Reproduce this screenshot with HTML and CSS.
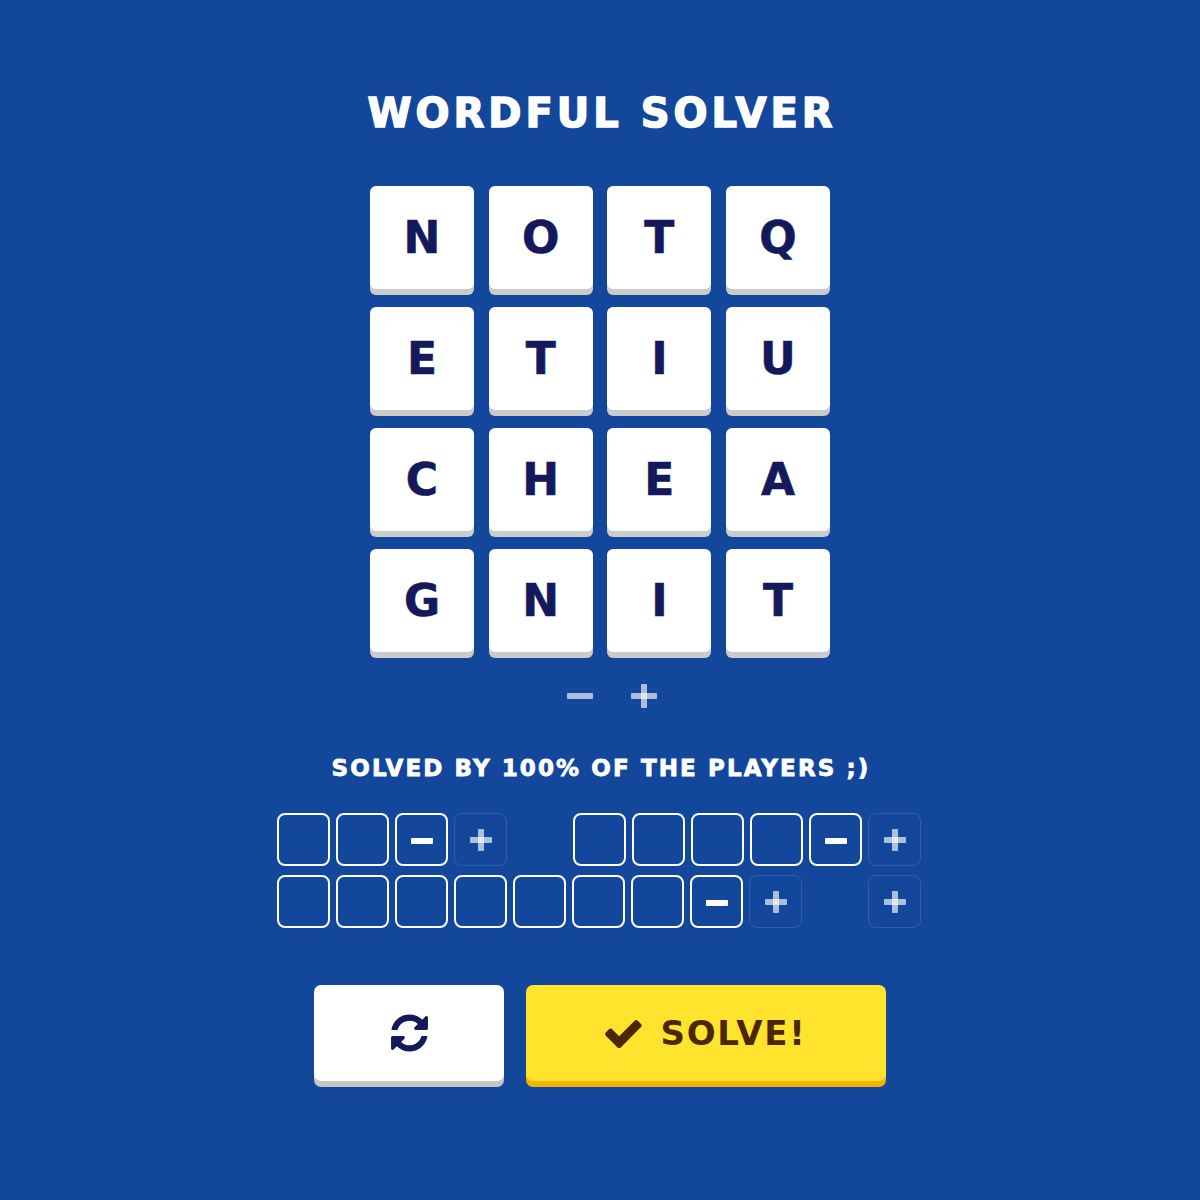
FILE: index.html
```html
<!DOCTYPE html>
<html>
<head>
<meta charset="utf-8">
<title>Wordful Solver</title>
<link rel="stylesheet" href="styles.css">
</head>
<body>
<main class="app">
  <h1 class="title">WORDFUL SOLVER</h1>

  <div class="grid">
    <div class="tile">N</div><div class="tile">O</div><div class="tile">T</div><div class="tile">Q</div>
    <div class="tile">E</div><div class="tile">T</div><div class="tile">I</div><div class="tile">U</div>
    <div class="tile">C</div><div class="tile">H</div><div class="tile">E</div><div class="tile">A</div>
    <div class="tile">G</div><div class="tile">N</div><div class="tile">I</div><div class="tile">T</div>
  </div>

  <div class="size-controls">
    <span class="ctl minus-ctl"></span>
    <span class="ctl plus-ctl"></span>
  </div>

  <p class="subtitle">SOLVED BY 100% OF THE PLAYERS ;)</p>

  <div class="words">
    <div class="word">
      <div class="box"></div><div class="box"></div>
      <div class="box"><span class="minus"></span></div>
      <div class="box add"><span class="plus"></span></div>
    </div>
    <div class="word">
      <div class="box"></div><div class="box"></div><div class="box"></div><div class="box"></div>
      <div class="box"><span class="minus"></span></div>
      <div class="box add"><span class="plus"></span></div>
    </div>
    <div class="word">
      <div class="box"></div><div class="box"></div><div class="box"></div><div class="box"></div>
      <div class="box"></div><div class="box"></div><div class="box"></div>
      <div class="box"><span class="minus"></span></div>
      <div class="box add"><span class="plus"></span></div>
    </div>
    <div class="word">
      <div class="box add"><span class="plus"></span></div>
    </div>
  </div>

  <div class="actions">
    <button class="btn btn-reset" type="button" aria-label="Reset">
      <svg class="icon-refresh" viewBox="0 64 1536 1664" width="37" height="40" aria-hidden="true">
        <path fill="#13195a" d="M1511 1056q0 5-1 7-64 268-268 434.5t-478 166.5q-146 0-282.5-55t-243.5-157l-129 129q-19 19-45 19t-45-19-19-45v-448q0-26 19-45t45-19h448q26 0 45 19t19 45-19 45l-137 137q71 66 161 102t187 36q134 0 250-65t186-179q11-17 53-117 8-23 30-23h192q13 0 22.5 9.5t9.5 22.5zm25-800v448q0 26-19 45t-45 19h-448q-26 0-45-19t-19-45 19-45l138-138q-148-137-349-137-134 0-250 65t-186 179q-11 17-53 117-8 23-30 23h-199q-13 0-22.5-9.5t-9.5-22.5v-7q65-268 270-434.5t480-166.5q146 0 284 55.5t245 156.5l130-129q19-19 45-19t45 19 19 45z"/>
      </svg>
    </button>
    <button class="btn btn-solve" type="button">
      <svg class="icon-check" viewBox="120 290 1560 1230" width="37" height="29" aria-hidden="true">
        <path fill="#4a2700" d="M1671 566q0 40-28 68l-724 724-136 136q-28 28-68 28t-68-28l-136-136-362-362q-28-28-28-68t28-68l136-136q28-28 68-28t68 28l294 295 656-657q28-28 68-28t68 28l136 136q28 28 28 68z"/>
      </svg>
      <span class="solve-text">SOLVE!</span>
    </button>
  </div>
</main>
</body>
</html>
```

FILE: styles.css
```css
html, body {
  margin: 0;
  padding: 0;
}

body {
  background: #13479c;
  font-family: "DejaVu Sans", Verdana, sans-serif;
  font-weight: bold;
  min-height: 1200px;
}

.app {
  display: flex;
  flex-direction: column;
  align-items: center;
  padding-top: 93px;
}

.title {
  margin: 0;
  color: #ffffff;
  font-size: 40px;
  line-height: 40px;
  letter-spacing: 4px;
  padding-left: 4px;
  -webkit-text-stroke: 1.5px #ffffff;
}

.grid {
  margin-top: 53px;
  display: grid;
  grid-template-columns: repeat(4, 104px);
  grid-auto-rows: 103px;
  column-gap: 14.67px;
  row-gap: 18px;
}

.tile {
  background: #ffffff;
  border-radius: 6px;
  box-shadow: 0 6px 0 #cbcbcb;
  color: #13195a;
  font-size: 44px;
  -webkit-text-stroke: 0.6px #13195a;
  display: flex;
  align-items: center;
  justify-content: center;
}

.size-controls {
  margin-top: 32px;
  height: 24px;
  display: flex;
  align-items: center;
  gap: 38px;
  padding-left: 24px;
}

.ctl {
  position: relative;
  width: 26px;
  height: 24px;
  display: block;
}

.ctl::before,
.ctl::after {
  content: "";
  position: absolute;
  background: rgba(255, 255, 255, 0.65);
  border-radius: 1px;
}

.ctl::before {
  left: 0;
  right: 0;
  top: 9px;
  height: 6px;
}

.minus-ctl::after {
  display: none;
}

.plus-ctl::after {
  top: 0;
  bottom: 0;
  left: 10px;
  width: 6px;
}

.subtitle {
  margin: 46px 0 0;
  color: #ffffff;
  font-size: 23px;
  line-height: 28px;
  letter-spacing: 2.1px;
  padding-left: 2px;
  -webkit-text-stroke: 0.8px #ffffff;
}

.words {
  margin-top: 31px;
  width: 646px;
  display: flex;
  flex-wrap: wrap;
  column-gap: 66px;
  row-gap: 9px;
}

.word {
  display: flex;
  gap: 6px;
}

.box {
  width: 53px;
  height: 53px;
  box-sizing: border-box;
  border: 2px solid #ffffff;
  border-radius: 8px;
  display: flex;
  align-items: center;
  justify-content: center;
}

.box.add {
  border: 1px solid rgba(255, 255, 255, 0.12);
}

.minus {
  display: block;
  width: 22px;
  height: 6px;
  background: #ffffff;
  border-radius: 1px;
  margin-top: 3px;
}

.plus {
  position: relative;
  display: block;
  width: 22px;
  height: 22px;
}

.plus::before,
.plus::after {
  content: "";
  position: absolute;
  background: rgba(255, 255, 255, 0.65);
  border-radius: 1px;
}

.plus::before {
  left: 0;
  right: 0;
  top: 8px;
  height: 6px;
}

.plus::after {
  top: 0;
  bottom: 0;
  left: 8px;
  width: 6px;
}

.actions {
  margin-top: 57px;
  display: flex;
  gap: 22px;
}

.btn {
  border: 0;
  border-radius: 7px;
  height: 96px;
  padding: 0;
  display: flex;
  align-items: center;
  justify-content: center;
  font-family: "DejaVu Sans", Verdana, sans-serif;
  font-weight: bold;
  cursor: pointer;
}

.btn-reset {
  width: 190px;
  background: #ffffff;
  box-shadow: 0 6px 0 #c6c6c6;
}

.btn-solve {
  width: 360px;
  background: #ffe32c;
  box-shadow: 0 6px 0 #f2b400;
  gap: 18px;
}

.icon-refresh,
.icon-check {
  display: block;
}

.solve-text {
  color: #4a2700;
  font-size: 34px;
  letter-spacing: 1.8px;
  line-height: 34px;
}
```
